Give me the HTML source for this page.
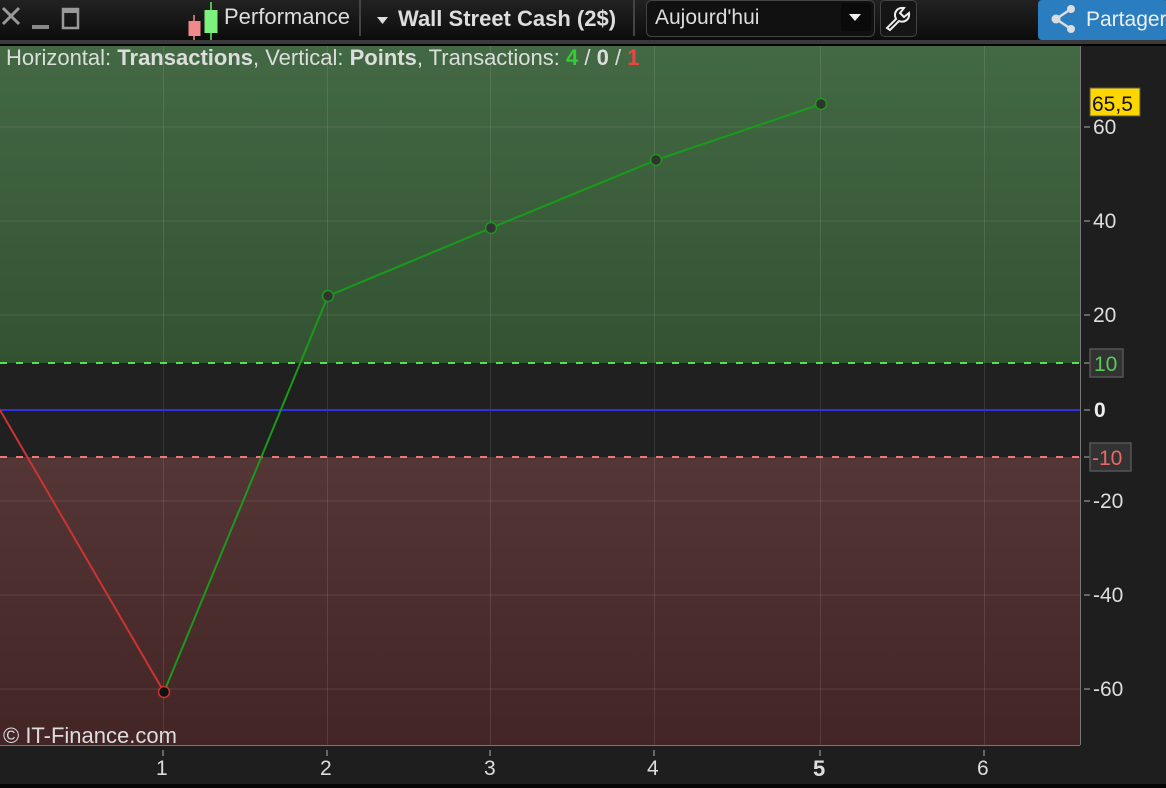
<!DOCTYPE html>
<html><head><style>
body{margin:0;width:1166px;height:788px;background:#1e1e1e;overflow:hidden;font-family:"Liberation Sans",sans-serif;position:relative}
.top{position:absolute;left:0;top:0;width:1166px;height:40px;background:linear-gradient(#222,#0c0c0c)}
.t{position:absolute;color:#ddd;font-size:22px;line-height:26px}
</style></head><body>
<div class="top"></div>
<div style="position:absolute;left:0;top:40px;width:1166px;height:4px;background:#3a3a3a"></div>
<div style="position:absolute;left:0;top:44px;width:1166px;height:2px;background:#000"></div>
<div style="position:absolute;left:0;top:784px;width:1166px;height:4px;background:#050505"></div>
<svg style="position:absolute;left:0;top:0" width="1166" height="40">
<path d="M3 8 L19 24 M19 8 L3 24" stroke="#999" stroke-width="3"/>
<rect x="32" y="25" width="17" height="4" fill="#888"/>
<rect x="63" y="9" width="15" height="19" fill="none" stroke="#999" stroke-width="2.5"/><rect x="63" y="9" width="15" height="4" fill="#999"/>
<line x1="194" y1="15" x2="194" y2="42" stroke="#f88" stroke-width="1.5"/><rect x="188.5" y="21" width="12" height="15" fill="#f08a8a"/>
<line x1="211" y1="2" x2="211" y2="42" stroke="#6e6" stroke-width="1.5"/><rect x="204.5" y="10" width="13" height="23" fill="#7ef07e"/>
<line x1="360" y1="0" x2="360" y2="36" stroke="#444" stroke-width="2"/>
<path d="M377 17h11l-5.5 7z" fill="#ddd"/>
<line x1="634" y1="0" x2="634" y2="36" stroke="#444" stroke-width="2"/>
<rect x="646.5" y="0.5" width="228" height="36" rx="5" fill="#111" stroke="#444"/>
<rect x="841" y="3" width="30" height="28" rx="3" fill="#0a0a0a"/><path d="M849 14h12l-6 7z" fill="#eee"/>
<rect x="880.5" y="0.5" width="36" height="36" rx="4" fill="#151515" stroke="#444"/>
<path d="M887 28 L896 19 C893 13 897 7 904 8 L900 13 L904 17 L909 13 C910 20 904 23 899 21 L890 30 Z" fill="none" stroke="#eee" stroke-width="2"/>
<rect x="1038" y="0" width="130" height="40" rx="4" fill="#2a7ec0"/>
<circle cx="1071" cy="9" r="4" fill="#ddd"/><circle cx="1071" cy="29" r="4" fill="#ddd"/><circle cx="1056" cy="19" r="4.5" fill="#ddd"/>
<path d="M1071 9 L1056 19 L1071 29" stroke="#ddd" stroke-width="2.5" fill="none"/>
</svg>
<div class="t" style="left:224px;top:4px">Performance</div>
<div class="t" style="left:398px;top:6px;font-weight:bold">Wall Street Cash (2$)</div>
<div class="t" style="left:655px;top:5px;font-size:21px">Aujourd'hui</div>
<div class="t" style="left:1086px;top:7px;color:#eee;font-size:21px">Partager</div>
<svg style="position:absolute;left:0;top:46px" width="1166" height="738">
<defs>
<linearGradient id="g" x1="0" y1="0" x2="0" y2="1"><stop offset="0" stop-color="#436944"/><stop offset="1" stop-color="#335232"/></linearGradient>
<linearGradient id="r" x1="0" y1="0" x2="0" y2="1"><stop offset="0" stop-color="#553636"/><stop offset="1" stop-color="#432525"/></linearGradient>
</defs>
<rect x="0" y="0" width="1080" height="317" fill="url(#g)"/>
<rect x="0" y="317" width="1080" height="94" fill="#202020"/>
<rect x="0" y="411" width="1080" height="288" fill="url(#r)"/>
<g stroke="rgba(255,255,255,0.1)" stroke-width="1">
<line x1="163.5" y1="0" x2="163.5" y2="699"/><line x1="327.5" y1="0" x2="327.5" y2="699"/><line x1="490.5" y1="0" x2="490.5" y2="699"/><line x1="654.5" y1="0" x2="654.5" y2="699"/><line x1="820.5" y1="0" x2="820.5" y2="699"/><line x1="984.5" y1="0" x2="984.5" y2="699"/>
<line x1="0" y1="81" x2="1080" y2="81"/><line x1="0" y1="175" x2="1080" y2="175"/><line x1="0" y1="269" x2="1080" y2="269"/><line x1="0" y1="455" x2="1080" y2="455"/><line x1="0" y1="549" x2="1080" y2="549"/><line x1="0" y1="643" x2="1080" y2="643"/>
</g>
<line x1="1080.5" y1="0" x2="1080.5" y2="699" stroke="#777"/>
<line x1="0" y1="699.5" x2="1080" y2="699.5" stroke="#777"/>
<line x1="0" y1="317" x2="1080" y2="317" stroke="#55e055" stroke-width="2" stroke-dasharray="7,9"/>
<line x1="0" y1="411" x2="1080" y2="411" stroke="#ee7777" stroke-width="2" stroke-dasharray="7,9"/>
<line x1="0" y1="364" x2="1080" y2="364" stroke="#3030e0" stroke-width="2"/>
<polyline points="0,364 164,646" stroke="#c33" stroke-width="2" fill="none"/>
<polyline points="164,646 328,250 491,182 656,114 821,58" stroke="#1a9a1a" stroke-width="2" fill="none"/>
<circle cx="164" cy="646" r="5.5" fill="#111" stroke="#c33" stroke-width="1.5"/>
<g fill="#333" stroke="#1a9a1a" stroke-width="1.5"><circle cx="328" cy="250" r="5.5"/><circle cx="491" cy="182" r="5.5"/><circle cx="656" cy="114" r="5.5"/><circle cx="821" cy="58" r="5.5"/></g>
<g stroke="#666" stroke-width="2">
<line x1="1084" y1="81" x2="1090" y2="81"/><line x1="1084" y1="175" x2="1090" y2="175"/><line x1="1084" y1="269" x2="1090" y2="269"/><line x1="1084" y1="317" x2="1090" y2="317"/><line x1="1084" y1="364" x2="1090" y2="364"/><line x1="1084" y1="411" x2="1090" y2="411"/><line x1="1084" y1="455" x2="1090" y2="455"/><line x1="1084" y1="549" x2="1090" y2="549"/><line x1="1084" y1="643" x2="1090" y2="643"/>
<line x1="163" y1="704" x2="163" y2="710"/><line x1="327" y1="704" x2="327" y2="710"/><line x1="490" y1="704" x2="490" y2="710"/><line x1="654" y1="704" x2="654" y2="710"/><line x1="820" y1="704" x2="820" y2="710"/><line x1="984" y1="704" x2="984" y2="710"/>
</g>
<rect x="1090" y="42" width="50" height="28" fill="#ffd700" stroke="#555"/>
<rect x="1090" y="303" width="33" height="28" fill="#333" stroke="#555" stroke-width="1.5"/>
<rect x="1090" y="397" width="41" height="28" fill="#333" stroke="#555" stroke-width="1.5"/>
<g font-family="Liberation Sans" font-size="21" fill="#ddd">
<text x="1092" y="65" fill="#111">65,5</text>
<text x="1093" y="88">60</text><text x="1093" y="182">40</text><text x="1093" y="276">20</text>
<text x="1094" y="325" fill="#5c5">10</text>
<text x="1094" y="371" font-weight="bold" fill="#eee">0</text>
<text x="1092" y="419" fill="#e66">-10</text>
<text x="1093" y="462">-20</text><text x="1093" y="556">-40</text><text x="1093" y="650">-60</text>
<text x="156" y="729">1</text><text x="320" y="729">2</text><text x="484" y="729">3</text><text x="647" y="729">4</text><text x="813" y="730" font-weight="bold" font-size="22">5</text><text x="977" y="729">6</text>
<text x="3" y="697" font-size="22">© IT-Finance.com</text>
</g>
<text x="6" y="19" font-family="Liberation Sans" font-size="22" fill="#ddd">Horizontal: <tspan font-weight="bold">Transactions</tspan>, Vertical: <tspan font-weight="bold">Points</tspan>, Transactions: <tspan font-weight="bold" fill="#3c3">4</tspan> / <tspan font-weight="bold">0</tspan> / <tspan font-weight="bold" fill="#e44">1</tspan></text>
</svg>
</body></html>
